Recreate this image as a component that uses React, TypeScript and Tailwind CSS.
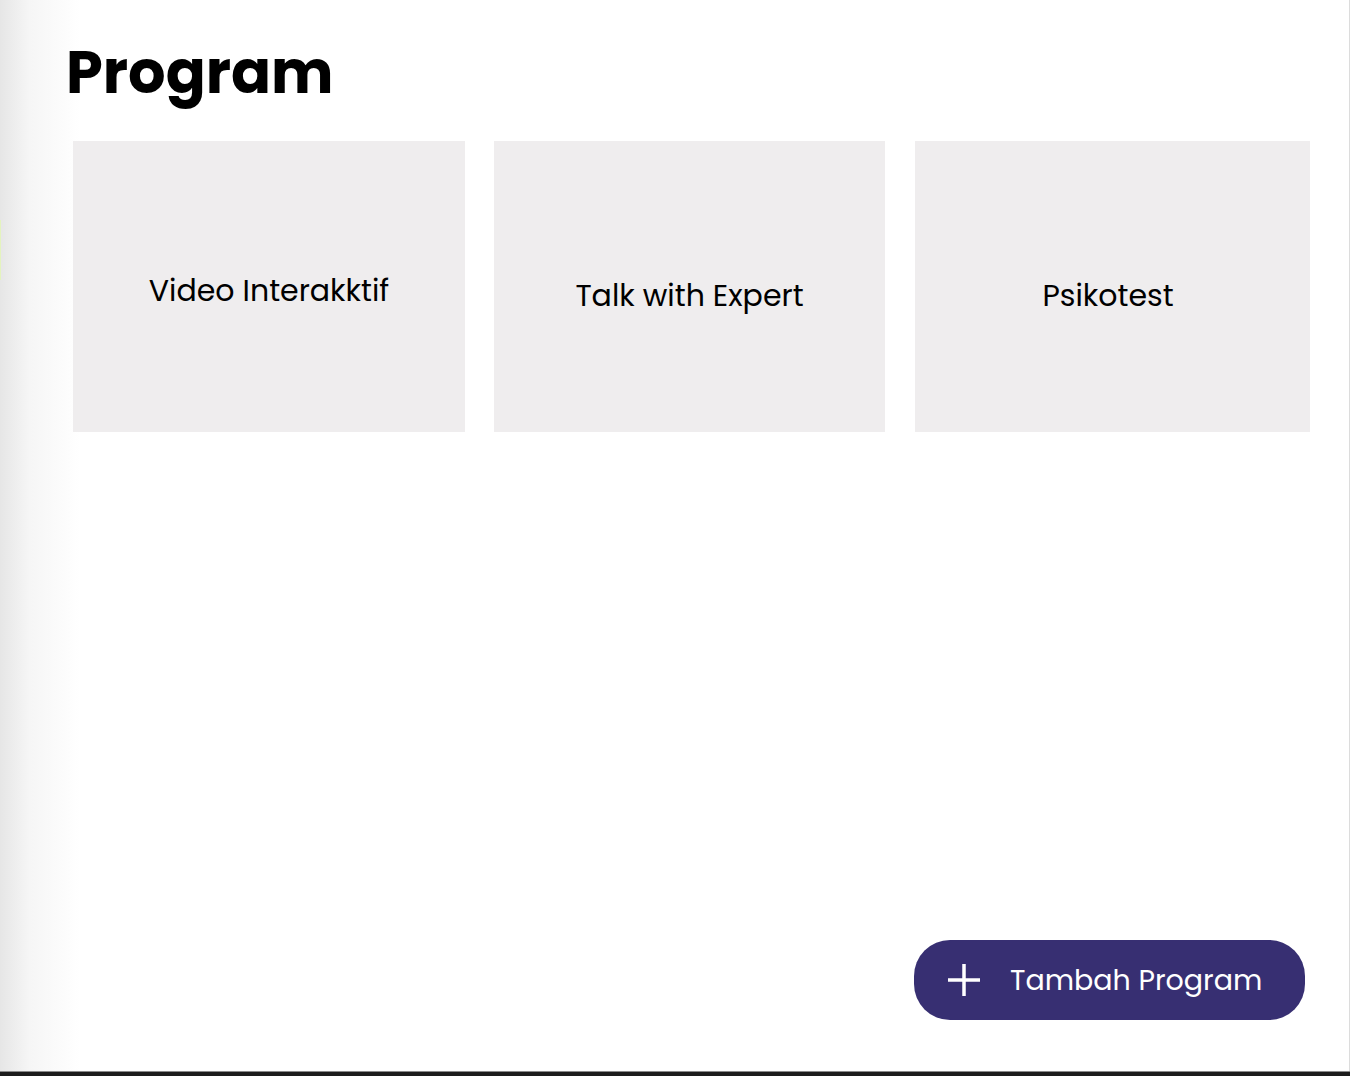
import React from "react";

const font = { fontFamily: '"Poppins", "DejaVu Sans", sans-serif' };

export default function App() {
  return (
    <div className="flex h-[1076px] w-[1350px] flex-col bg-white" style={font}>
      <div className="relative flex flex-1 flex-col border-r border-[#dcdcdc] bg-[linear-gradient(to_right,#e6e6e6_0px,#f6f6f6_30px,#ffffff_80px)]">
        <div className="absolute left-0 top-[220px] h-[60px] w-[1px] bg-[#e4f3bf]" />
        <h1 className="pl-[66px] pt-[37px] text-[59px] font-bold leading-[72px] text-black">Program</h1>
        <div className="mt-[32px] grid grid-cols-[392px_391px_396px] gap-x-[29px] pl-[73px]">
          <div className="flex h-[291px] items-center justify-center bg-[#efedee] pt-[9px]">
            <span className="text-[30px] leading-none text-black">Video Interakktif</span>
          </div>
          <div className="flex h-[291px] items-center justify-center bg-[#efedee] pt-[18px]">
            <span className="text-[30px] leading-none text-black">Talk with Expert</span>
          </div>
          <div className="ml-[1px] flex h-[291px] items-center justify-center bg-[#efedee] pr-[9px] pt-[18px]">
            <span className="text-[30px] leading-none text-black">Psikotest</span>
          </div>
        </div>
        <div className="mt-auto flex justify-end pb-[51px] pr-[44px]">
          <button className="flex h-[80px] w-[391px] items-center rounded-[36px] bg-[#372f72] pl-[33px] text-white">
            <svg width="34" height="34" viewBox="0 0 34 34" fill="none" stroke="white" strokeWidth="3.5">
              <path d="M17 1v32M1 17h32" />
            </svg>
            <span className="ml-[29px] text-[28.5px] leading-none">Tambah Program</span>
          </button>
        </div>
      </div>
      <div className="h-[5px] border-t border-[#8a8a8a] bg-[#1c1c1c]" />
    </div>
  );
}
